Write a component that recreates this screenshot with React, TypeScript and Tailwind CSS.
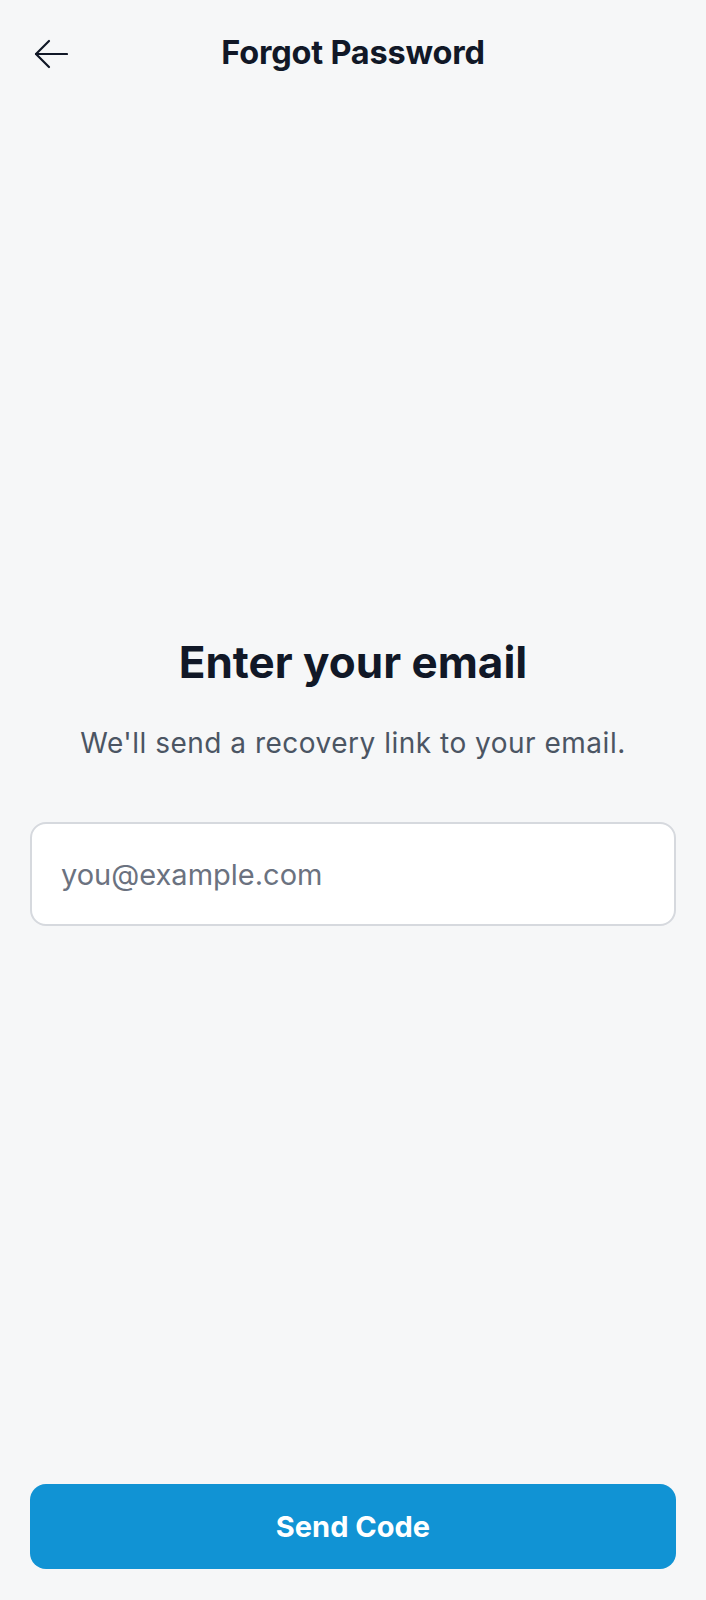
import { useState } from "react";

export default function App() {
  const [email, setEmail] = useState("");

  return (
    <div
      className="min-h-screen bg-[#f6f7f8] flex flex-col px-[30px]"
      style={{ fontFamily: "Inter, 'Noto Sans', sans-serif" }}
    >
      {/* Header */}
      <header className="relative h-[106px] flex items-center justify-center">
        <button className="absolute left-[4px] top-[39px] text-[#111827]" aria-label="Back">
          <svg width="34" height="30" viewBox="0 0 34 30" fill="none" stroke="currentColor" strokeWidth="2.2" strokeLinecap="round" strokeLinejoin="round">
            <path d="M33 15H2" />
            <path d="M15 2L2 15l13 13" />
          </svg>
        </button>
        <h1 className="text-[32.5px] font-bold text-[#111827] tracking-[-0.2px]">Forgot Password</h1>
      </header>

      {/* Content */}
      <main className="flex-1 flex flex-col justify-center pb-[29px]">
        <h2 className="text-center text-[44px] leading-[55px] font-bold text-[#111827]">Enter your email</h2>
        <p className="mt-[32px] text-center text-[28px] leading-[42px] text-[#4b5563] tracking-[0.5px]">
          We'll send a recovery link to your email.
        </p>
        <input
          type="email"
          value={email}
          onChange={(e) => setEmail(e.target.value)}
          placeholder="you@example.com"
          className="mt-[58px] h-[104px] w-full rounded-[16px] border-2 border-[#d6d9de] bg-white px-[29px] text-[29px] text-[#111827] placeholder:text-[#6b7280] outline-none"
        />
      </main>

      {/* Footer */}
      <div className="pb-[31px]">
        <button className="h-[85px] w-full rounded-[16px] bg-[#1193d4] text-[29px] font-bold text-white">
          Send Code
        </button>
      </div>
    </div>
  );
}
